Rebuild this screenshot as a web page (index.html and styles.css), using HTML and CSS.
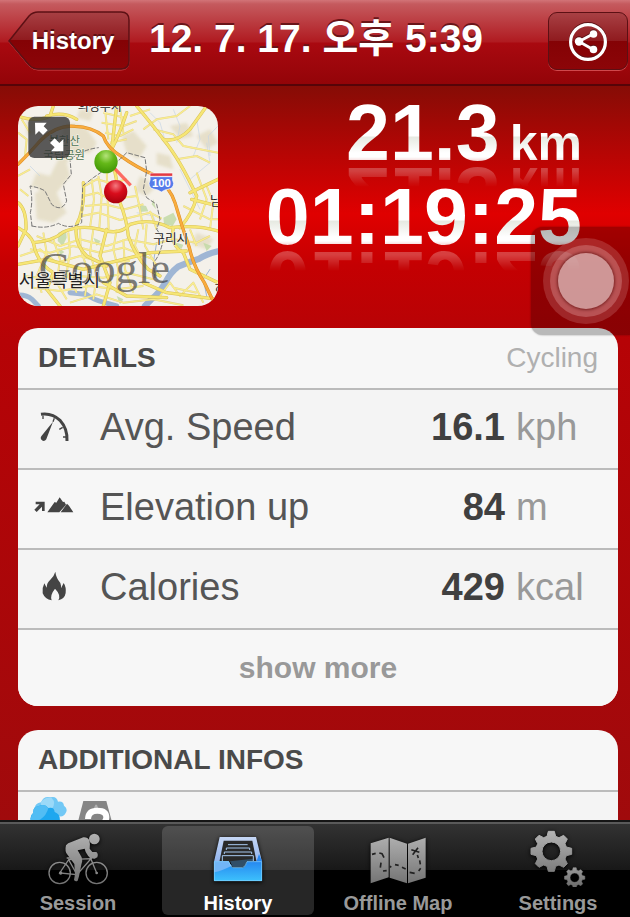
FILE: index.html
```html
<!DOCTYPE html>
<html lang="ko">
<head>
<meta charset="utf-8">
<meta name="viewport" content="width=device-width, initial-scale=1">
<title>12. 7. 17. 오후 5:39</title>
<link rel="stylesheet" href="styles.css">
</head>
<body>
<header class="topbar">
  <button class="back" type="button">
    <svg class="back-shape" viewBox="0 0 122 60" preserveAspectRatio="none" aria-hidden="true">
      <defs>
        <linearGradient id="backFill" x1="0" y1="0" x2="0" y2="1">
          <stop offset="0" stop-color="#a84044"/><stop offset=".5" stop-color="#8f1a1e"/>
          <stop offset=".5" stop-color="#840205"/><stop offset="1" stop-color="#8c0508"/>
        </linearGradient>
      </defs>
      <path d="M1 31 L21 6 Q25 2 30 2 H113 Q121 2 121 10 V51 Q121 59 113 59 H30 Q25 59 21 55Z" fill="none" stroke="#d0484c" stroke-width="1"/>
      <path d="M1 30 L21 5 Q25 1 30 1 H113 Q121 1 121 9 V50 Q121 58 113 58 H30 Q25 58 21 54Z" fill="url(#backFill)" stroke="#5c1014" stroke-width="1.5"/>
    </svg>
    <span class="back-label">History</span>
  </button>
  <h1 class="title">12. 7. 17. 오후 5:39</h1>
  <button class="share" type="button" aria-label="Share">
    <svg class="share-icon" viewBox="0 0 40 40" aria-hidden="true">
      <circle cx="20" cy="21" r="17.400" fill="none" stroke="#fff" stroke-width="3.200"/>
      <path d="M25 13 L11 20.500 L25 28.500" fill="none" stroke="#fff" stroke-width="2.800"/>
      <circle cx="25.500" cy="13" r="3.800" fill="#fff"/><circle cx="11" cy="20.500" r="4.200" fill="#fff"/><circle cx="25.500" cy="28.500" r="3.800" fill="#fff"/>
    </svg>
  </button>
</header>

<main class="content">
  <section class="hero">
    <button class="map" type="button" aria-label="Expand map">
      <svg class="map-art" viewBox="24 30 600 600" aria-hidden="true">
        <defs>
          <radialGradient id="pinGreen" cx=".5" cy=".25" r=".75"><stop offset="0" stop-color="#b4e37a"/><stop offset=".45" stop-color="#64b818"/><stop offset="1" stop-color="#3f9404"/></radialGradient>
          <radialGradient id="pinRed" cx=".5" cy=".25" r=".75"><stop offset="0" stop-color="#f47a80"/><stop offset=".45" stop-color="#d90d1c"/><stop offset="1" stop-color="#a8000c"/></radialGradient>
          <filter id="soft" x="-10%" y="-10%" width="120%" height="120%"><feGaussianBlur stdDeviation="4"/></filter>
          <g id="roads" fill="none" stroke-linecap="round" stroke-linejoin="round">
            <path d="M24 395 Q60 415 70 440 Q130 435 160 408 Q210 385 270 400 Q330 420 360 385 Q420 365 480 395 Q560 385 624 405"/>
            <path d="M300 165 Q320 240 330 320 Q350 370 355 420 Q375 480 415 520 L450 540"/>
            <path d="M320 30 Q312 100 305 160 M350 50 Q330 110 305 160"/>
            <path d="M24 320 Q50 340 48 400 L24 450 M70 440 Q80 500 130 530 L110 580 L150 630"/>
            <path d="M380 30 Q430 90 460 130 Q510 190 560 300 Q550 350 510 395"/>
            <path d="M220 260 Q225 340 200 385 Q190 440 230 480 L290 510"/>
            <path d="M110 60 Q160 45 200 70 M24 60 Q80 80 120 60 L130 30"/>
            <path d="M460 130 Q500 140 540 100 L590 30 M540 290 L624 250 M545 310 L624 330"/>
            <path d="M490 395 Q480 450 520 470 L540 520 L624 560 M400 560 L470 590 L624 610"/>
            <path d="M24 505 L110 490 L220 520 L300 500 L420 470 L530 465"/>
            <path d="M280 560 L350 600 L470 605 M290 400 L270 480 L300 560 L280 630"/>
          </g>
          <g id="lanes" fill="none" stroke-linejoin="round">
            <path d="M225 270 L260 250 L305 262 L350 250 M222 300 L262 290 L300 310 L380 300 M225 330 L285 325 L345 340 L400 325 M215 360 L265 350 L330 372 L420 350 L455 368"/>
            <path d="M245 250 L252 310 L240 395 M265 240 L275 300 L268 395 M290 220 L296 400 M375 270 L388 330 L400 400 M420 345 L440 400"/>
            <path d="M80 420 L150 450 L210 430 L290 450 L350 430 L430 445 L490 430 M60 460 L120 470 L190 450 L270 470 L340 455 L430 490 M30 480 L90 460 L140 500 L210 480 L280 500 L360 495"/>
            <path d="M100 410 L110 470 L80 540 L95 590 M130 430 L150 490 L140 560 L170 610 M175 410 L180 470 L170 530 L200 590 M210 395 L212 460 L235 530 L225 600 M250 400 L240 470 L260 540 L250 610 M320 400 L310 460 L325 520 L320 590 M340 430 L345 520 L370 590 M385 400 L375 450 L400 500 M410 385 L405 450 L440 510"/>
            <path d="M40 540 L120 550 L200 540 L280 545 L350 530 L430 550 M70 575 L150 585 L240 570 L320 580 L400 570 M180 620 L260 595 L340 620 L430 610 L520 628"/>
            <path d="M280 50 L345 65 M275 80 L340 90 L380 75 M285 110 L330 120 L370 100 M285 40 L295 130 M330 35 L340 110 M360 60 L420 40 M300 140 L350 130"/>
            <path d="M400 100 L440 70 L500 60 L540 30 M430 100 L490 115 L520 150 L624 170 M500 190 L560 180 L600 200 M560 230 L590 310 L570 370 M520 330 L600 370 L624 370 M490 430 L560 440 L600 420 M540 400 L560 450"/>
            <path d="M24 240 L60 220 M30 280 L55 300 M24 110 L50 130 L45 180 M35 70 L60 110 M590 270 L610 320 L600 400 M450 600 L480 560 L510 600 L550 560 L580 620 M490 575 L560 590"/>
          </g>
        </defs>
        <rect x="24" y="30" width="600" height="600" fill="#f4f1ea"/>
        <g fill="#ddd4b4" opacity=".6" filter="url(#soft)">
          <path d="M160 90 Q200 70 235 105 L260 140 Q240 190 210 160 L170 200 L180 240 L140 290 L160 340 L110 330 L80 270 L60 280 L80 230 L120 240 L150 180Z"/>
          <path d="M335 120 L370 105 L410 150 L385 190 L350 170Z M390 240 L440 270 L410 300 L375 285Z M480 90 L530 80 L550 120 L510 130Z M560 120 L600 100 L624 140 L590 160Z M210 40 L250 45 L240 75 L200 65Z M440 170 L480 180 L490 220 L440 205Z M50 65 L75 70 L80 110 L50 120Z M560 410 L610 430 L590 460 L545 445Z M75 290 L130 280 L170 350 L130 380 L80 370Z"/>
        </g>
        <g fill="#c2d9a6" opacity=".85"><path d="M460 365 L490 350 L500 370 L488 390 L462 385Z M380 325 L408 330 L415 346 L390 348Z M145 410 L168 400 L170 425 L158 450 L143 435Z M500 440 L520 446 L515 458 L497 452Z M250 425 L272 435 L260 450Z M430 310 L438 340 L425 325Z M145 455 L163 468 L150 478Z M580 440 L605 450 L590 465Z M320 600 L340 610 L330 625Z"/></g>
        <g fill="none" stroke="#c5d4e4" stroke-width="2"><path d="M490 40 L510 90 L500 140 M560 70 L570 130 L550 180 M590 140 L600 200 L540 250 M510 220 L530 260 L570 340 M60 210 L90 240 M380 350 L430 360 L450 420 M624 90 L595 120 L600 180 M420 50 L450 80 L470 150"/></g>
        <g fill="none" stroke="#9fb6d4" stroke-linecap="round"><path d="M624 466 Q590 474 568 488 Q530 500 504 512 Q480 530 466 560 Q448 592 424 610 L405 630" stroke-width="19"/><path d="M24 597 Q50 596 66 610 L85 630 M225 592 Q250 612 285 620 L320 630 M180 590 L225 595" stroke-width="15"/><path d="M600 520 L580 550 L590 600 M440 440 L430 500 L450 540" stroke-width="3"/></g>
        <use href="#lanes" stroke="#dccb78" stroke-width="6" opacity=".8"/><use href="#lanes" stroke="#f9ec8e" stroke-width="4"/>
        <use href="#roads" stroke="#d9c258" stroke-width="10"/><use href="#roads" stroke="#f6e675" stroke-width="7"/>
        <g fill="none" stroke-linecap="round">
          <path d="M24 205 Q60 170 90 135 Q140 85 195 91 Q245 92 280 120 Q290 155 335 182 Q380 215 435 238 Q480 275 495 320 Q515 390 538 455 Q550 510 583 560 L607 610" stroke="#d98d25" stroke-width="10"/>
          <path d="M24 205 Q60 170 90 135 Q140 85 195 91 Q245 92 280 120 Q290 155 335 182 Q380 215 435 238 Q480 275 495 320 Q515 390 538 455 Q550 510 583 560 L607 610" stroke="#f9ac3e" stroke-width="7"/>
          <path d="M66 390 L61 350 Q70 310 60 270 Q90 275 105 285 L125 325 Q155 350 170 315 L160 265 L184 235 L180 190 Q220 160 265 155 M66 390 Q110 400 145 382 Q180 402 215 380 L218 270 L250 245 L330 190 L350 170 L405 185 L410 225 L400 280 L410 305 L440 325 L450 370 L440 400 L460 430 Q450 480 430 500 L435 545" stroke="#777" stroke-width="3" stroke-dasharray="12 7"/>
        </g>
        <g class="map-text">
          <text x="203" y="44" font-size="36">의정부시</text>
          <text x="116" y="148" font-size="34" class="park">북한산</text>
          <text x="100" y="188" font-size="34" class="park">국립공원</text>
          <text x="430" y="440" font-size="38">구리시</text>
          <text x="600" y="328" font-size="38">남</text>
          <text x="614" y="592" font-size="38">하</text>
          <text x="86" y="562" font-size="134" class="brand">Google</text>
          <text x="26" y="574" font-size="53">서울특별시</text>
        </g>
        <path d="M420 231 H488 V241 H420Z" fill="#e33b42" stroke="#fff" stroke-width="2"/>
        <path d="M420 242 H488 Q486 252 491 262 Q490 277 477 279 Q465 280 454 288 Q443 280 431 279 Q418 277 417 262 Q422 252 420 242Z" fill="#557bea" stroke="#fff" stroke-width="2"/>
        <text x="454" y="272" class="route">100</text>
        <path d="M305 208 L362 268" stroke="#ff4a42" stroke-opacity=".8" stroke-width="10"/>
        <circle cx="288" cy="197" r="35" fill="url(#pinGreen)"/><circle cx="317" cy="287" r="35" fill="url(#pinRed)"/>
        <rect x="55" y="62" width="125" height="124" rx="18" fill="#333" fill-opacity=".8"/>
        <path d="M75 80 H110 L101 91 L113 103 L99 117 L87 105 L76 116Z" fill="#fff"/>
        <path d="M160 166 H123 L134 154 L120 141 L134 127 L148 141 L160 130Z" fill="#fff"/>
      </svg>
    </button>
    <div class="stats">
      <p class="stat">21.3<span class="stat-unit">km</span></p>
      <p class="stat">01:19:25</p>
    </div>
  </section>

  <section class="card">
    <div class="card-head"><h2 class="card-title">DETAILS</h2><span class="card-note">Cycling</span></div>
    <table class="metrics">
      <tbody>
      <tr>
        <td class="metric-icon"><svg class="glyph" viewBox="0 0 126 96" aria-hidden="true">
          <path d="M39 10 Q72 5 97 29 Q119 53 117 90" fill="none" stroke="#444" stroke-width="9"/>
          <path d="M45 14 V24 M79 22 L75 32 M104 49 L94 55 M116 78 H105" stroke="#444" stroke-width="4"/>
          <path d="M75 32 L56 82 A9 9 0 1 1 41 74Z" fill="#444"/></svg></td>
        <th class="metric-name" scope="row">Avg. Speed</th><td class="metric-value">16.1</td><td class="metric-unit">kph</td>
      </tr>
      <tr>
        <td class="metric-icon"><svg class="glyph" viewBox="0 0 126 96" aria-hidden="true">
          <path d="M23 32 H50 V60 H42 V47 L26 63 L19 56 L35 40 H23Z" fill="#444"/>
          <path d="M58 64 L80 33 L85 35 L95 19 L105 33 L109 32 L114 41 L94 64Z M98 64 L117 38 L123 44 L136 64Z" fill="#444"/></svg></td>
        <th class="metric-name" scope="row">Elevation up</th><td class="metric-value">84</td><td class="metric-unit">m</td>
      </tr>
      <tr>
        <td class="metric-icon"><svg class="glyph" viewBox="0 0 126 96" aria-hidden="true">
          <path d="M82 2 Q84 20 97 36 Q100 44 99 52 L107 36 Q115 48 113 66 Q110 84 91 88 Q100 72 81 53 Q65 73 71 88 Q51 85 44 67 Q42 50 49 37 L56 50 Q56 35 67 26 Q79 14 82 2Z" fill="#444"/></svg></td>
        <th class="metric-name" scope="row">Calories</th><td class="metric-value">429</td><td class="metric-unit">kcal</td>
      </tr>
      </tbody>
    </table>
    <button class="more" type="button">show more</button>
  </section>

  <section class="card">
    <div class="card-head"><h2 class="card-title">ADDITIONAL INFOS</h2></div>
    <div class="infos">
      <svg class="info-icon" viewBox="88 48 114 114" aria-hidden="true">
        <path d="M102 86 Q103 69 121 67 Q129 47 149 52 Q168 47 172 65 Q188 62 190 77 Q203 86 195 99 Q188 113 173 108 L160 125 L120 110Z" fill="#72c8f5"/>
        <path d="M120 68 Q132 49 153 54 Q168 69 153 88 L125 88Z" fill="#9bd9f8"/>
        <path d="M92 128 Q84 109 98 98 Q96 81 113 79 Q132 69 143 84 Q161 80 162 96 Q181 103 177 126 L160 146 H110Z" fill="#1ea7ef"/>
        <path d="M98 98 Q96 81 113 79 Q132 69 143 84 Q138 106 118 119 L92 124 Q87 108 98 98Z" fill="#52bdf4"/>
      </svg>
      <svg class="info-icon" viewBox="234 48 114 114" aria-hidden="true">
        <path d="M250 63 H319 L345 160 H225Z" fill="#858585"/>
        <path d="M286 74 H291 L294 84 H282Z" fill="#b0b0b0"/>
        <path d="M264 117 Q265 92 292 92 Q319 92 319 112 Q319 128 294 140" fill="none" stroke="#fff" stroke-width="18"/>
      </svg>
    </div>
  </section>
</main>

<nav class="tabs" aria-label="Main">
  <a class="tab" href="#session">
    <svg class="tab-icon" viewBox="0 0 228 183" aria-hidden="true">
      <defs><linearGradient id="metal" gradientUnits="userSpaceOnUse" x1="0" y1="20" x2="0" y2="180"><stop offset="0" stop-color="#b2b2b2"/><stop offset="1" stop-color="#707070"/></linearGradient></defs>
      <g fill="none" stroke="url(#metal)" stroke-width="4">
        <circle cx="59" cy="141" r="32"/><circle cx="170" cy="141" r="32"/>
        <path d="M59 141 L86 101 L111 146 Z M86 101 L153 98 L111 146 M80 96 H94 M148 87 L170 141 M147 87 L164 82"/>
      </g>
      <circle cx="62" cy="141" r="5" fill="#888"/><circle cx="170" cy="141" r="4" fill="#888"/>
      <circle cx="163" cy="39" r="16" fill="url(#metal)"/>
      <path d="M78 58 Q83 50 94 48 L130 34 Q143 33 148 43 Q151 53 149 68 L157 78 H169 Q176 83 172 94 L164 98 Q152 99 145 91 L137 78 L134 68 L113 73 L125 94 Q129 105 124 116 L117 151 L113 164 Q107 168 102 162 L105 145 L103 114 L83 87 Q73 78 78 58Z" fill="url(#metal)"/>
    </svg>
    <span class="tab-label">Session</span>
  </a>
  <a class="tab tab-current" href="#history" aria-current="page">
    <svg class="tab-icon" viewBox="600 135 228 183" aria-hidden="true">
      <defs>
        <linearGradient id="trayTop" x1="0" y1="0" x2="0" y2="1"><stop offset="0" stop-color="#c6d7f5"/><stop offset="1" stop-color="#91b4ee"/></linearGradient>
        <linearGradient id="trayFront" x1="0" y1="0" x2="0" y2="1"><stop offset="0" stop-color="#2687f0"/><stop offset="1" stop-color="#3dc1fc"/></linearGradient>
      </defs>
      <path d="M659 168 H768 L786 242 H642Z" fill="url(#trayTop)"/>
      <path d="M671 179 H757 L770 244 H658Z" fill="#292929"/>
      <path d="M642 241 H686 Q691 258 699 260 H728 Q736 258 741 241 H786 V300 H642Z" fill="url(#trayFront)"/>
      <path d="M642 241 H686 Q691 251 696 254 Q665 269 642 274Z" fill="#72b5f6"/>
      <path d="M769 243 L777 219 L786 241Z" fill="#2788f2"/>
      <path d="M690 241 L760 233 V241 H741 Q736 258 728 260 H699Z" fill="#314f68"/>
      <path d="M684 191 H743 M679 207 V201 H749 V207 M673 219 V213 H755 V219 M667 240 V224 H760 V240" fill="none" stroke="#a7c8ef" stroke-width="3"/>
      <path d="M643 242 V299 H785 V242 H741 Q736 258 728 260 H699 Q691 258 686 242Z" fill="none" stroke="#8ad4ff" stroke-width="2"/>
    </svg>
    <span class="tab-label">History</span>
  </a>
  <a class="tab" href="#map">
    <svg class="tab-icon" viewBox="148 135 228 183" aria-hidden="true">
      <defs><linearGradient id="metalMap" gradientUnits="userSpaceOnUse" x1="0" y1="165" x2="0" y2="310"><stop offset="0" stop-color="#b0b0b0"/><stop offset="1" stop-color="#737373"/></linearGradient></defs>
      <path d="M180 187 L234 170 V289 L180 307Z M237 170 L289 188 V307 L237 290Z M292 188 L345 170 V290 L292 307Z" fill="url(#metalMap)"/>
      <path d="M184 220 L195 217 M206 216 L214 218 L220 230 M211 245 L209 260 M217 270 L228 269 M237 259 L242 256 M253 251 L264 253 M274 259 L285 264 M297 274 L312 277 M324 270 L330 262 M329 250 L327 238 M323 231 L320 222 M302 206 L326 214 M306 221 L322 200" fill="none" stroke="#222" stroke-width="5"/>
    </svg>
    <span class="tab-label">Offline Map</span>
  </a>
  <a class="tab" href="#settings">
    <svg class="tab-icon" viewBox="632 135 228 183" aria-hidden="true">
      <defs>
        <linearGradient id="gearFill" gradientUnits="userSpaceOnUse" x1="0" y1="-60" x2="0" y2="60"><stop offset="0" stop-color="#b4b4b4"/><stop offset="1" stop-color="#7d7d7d"/></linearGradient>
        <path id="gear" fill-rule="evenodd" fill="url(#gearFill)" stroke="url(#gearFill)" stroke-width="3" stroke-linejoin="round" d="M-13 -45 L-9 -60 H9 L13 -45 L23 -41 L37 -48 L48 -37 L41 -23 L45 -13 L61 -9 V9 L45 13 L41 23 L48 37 L37 48 L23 41 L13 45 L9 60 H-9 L-13 45 L-23 41 L-37 48 L-48 37 L-41 23 L-45 13 L-61 9 V-9 L-45 -13 L-41 -23 L-48 -37 L-37 -48 L-23 -41Z M0 -28 A28 28 0 1 0 0 28 A28 28 0 1 0 0 -28Z"/>
      </defs>
      <use href="#gear" transform="translate(726 211)"/>
      <use href="#gear" transform="translate(796 290) scale(.5)" opacity=".85"/>
    </svg>
    <span class="tab-label">Settings</span>
  </a>
</nav>

<button class="assist" type="button" aria-label="Assistive menu"><span class="assist-ring"></span></button>
</body>
</html>
```

FILE: styles.css
```css
* { box-sizing: border-box; }

body {
  margin: 0;
  height: 100vh;
  display: flex;
  flex-direction: column;
  position: relative;
  overflow: hidden;
  font-family: "Liberation Sans", "Noto Sans CJK KR", sans-serif;
  background: #a10a0b;
}

button { font: inherit; margin: 0; padding: 0; border: 0; background: none; }
h1, h2, p { margin: 0; }

.topbar {
  flex: none;
  display: grid;
  grid-template-columns: 1fr auto 1fr;
  align-items: center;
  height: 86px;
  padding: 0 2px 2px 8px;
  border-bottom: 2px solid #560408;
  background: linear-gradient(#d27478 0, #c55a5e 4px, #b01a20 42px, #a90910 43px, #930408 100%);
}

.back {
  justify-self: start;
  position: relative;
  width: 122px;
  height: 60px;
  padding-left: 8px;
  color: #fff;
  font-size: 24px;
  font-weight: bold;
  text-shadow: 0 -2px 0 #5c1014;
}
.back-shape { position: absolute; inset: 0; width: 100%; height: 100%; }
.back-label { position: relative; }

.title {
  padding-right: 4px;
  padding-bottom: 4px;
  color: #fff;
  font-size: 39px;
  line-height: 56px;
  font-weight: bold;
  white-space: nowrap;
  text-shadow: 0 -2px 0 #6a1418;
}

.share {
  justify-self: end;
  display: grid;
  place-items: center;
  width: 80px;
  height: 58px;
  border: 1px solid #5c1014;
  border-radius: 9px;
  background: linear-gradient(#a84044, #8f1a1e 50%, #840205 50%, #8c0508);
  box-shadow: 0 1px 0 #d0484c;
}
.share-icon { width: 40px; height: 40px; filter: drop-shadow(0 -1px 0 #5c1014); }

.content {
  flex: 1;
  min-height: 0;
  overflow-y: auto;
  scrollbar-width: none;
  padding: 20px 12px 0 18px;
  background: linear-gradient(#860c06 0, #b80504 70px, #e00000 128px, #c40002 180px, #b60306 254px, #a00a0c 100%);
}

.hero { display: flex; height: 222px; }

.map {
  flex: none;
  width: 200px;
  height: 200px;
  border-radius: 20px;
  overflow: hidden;
}
.map-art { display: block; width: 100%; height: 100%; }
.map-text { font-family: "Noto Sans CJK KR", sans-serif; fill: #222; paint-order: stroke; stroke: #f8f6ee; stroke-width: 3px; }
.map-text .park { fill: #4c7250; }
.map-text .brand { font-family: "Liberation Serif", serif; fill: #444; fill-opacity: .7; stroke: none; }
.route { font: bold 34px "Liberation Sans", sans-serif; fill: #fff; text-anchor: middle; }

.stats { flex: 1; margin-top: -15px; padding-right: 36px; text-align: right; }
.stat {
  height: 84px;
  font-size: 79px;
  line-height: 84px;
  font-weight: bold;
  color: transparent;
  background: linear-gradient(#fff 45px, #e6e9e1 46px, #fff 62px, #fff 66px, #f3cccc 71px);
  -webkit-background-clip: text;
  background-clip: text;
  -webkit-box-reflect: below -22px linear-gradient(transparent 50px, rgba(255, 255, 255, .3) 70px);
}
.stat-unit { margin-left: 10px; font-size: 50px; }

.card {
  margin-bottom: 24px;
  border-radius: 20px;
  overflow: hidden;
  background: #f7f7f7;
}
.card-head {
  display: flex;
  align-items: center;
  justify-content: space-between;
  height: 62px;
  padding: 0 20px;
  border-bottom: 2px solid #bbb;
  font-size: 28px;
}
.card-title { font-size: 28px; font-weight: bold; color: #4a4a4a; }
.card-note { color: #b0b0b0; }

.metrics { width: 100%; table-layout: fixed; border-spacing: 0; font-size: 38px; }
.metrics td, .metrics th { height: 80px; padding: 0 0 4px; border-bottom: 2px solid #bbb; }
.metrics tr:nth-child(odd) { background: #f4f4f4; }
.metrics .metric-icon { width: 82px; padding-left: 10px; }
.glyph { display: block; width: 42px; height: 32px; overflow: visible; }
.metrics .metric-name { text-align: left; font-weight: normal; color: #555; }
.metric-value { width: 120px; text-align: right; font-weight: bold; color: #404040; }
.metrics .metric-unit { width: 113px; padding-left: 11px; color: #999; }

.more {
  display: block;
  width: 100%;
  height: 76px;
  background: #f7f7f7;
  color: #999;
  font-size: 30px;
  font-weight: bold;
}

.infos { display: flex; gap: 10px; height: 80px; padding: 4px 12px; background: #f4f4f4; }
.info-icon { width: 38px; height: 38px; }

.tabs {
  flex: none;
  display: grid;
  grid-template-columns: repeat(4, 1fr);
  gap: 8px;
  height: 97px;
  margin-right: -4px;
  padding: 4px 0 3px 2px;
  border-top: 2px solid #151515;
  background: linear-gradient(#5a5a5a 2px, #323232 2px, #181818 48px, #000 48px);
}
.tab {
  display: flex;
  flex-direction: column;
  align-items: center;
  border-radius: 6px;
  color: #999;
  font-size: 20px;
  font-weight: bold;
  line-height: 24px;
  text-decoration: none;
}
.tab-current { color: #fff; background: rgba(255, 255, 255, .15); }
.tab-icon { width: 76px; height: 61px; margin-bottom: 4px; filter: drop-shadow(0 1px 2px #000); }

.assist {
  position: absolute;
  top: 227px;
  right: -10px;
  display: grid;
  place-items: center;
  width: 109px;
  height: 108px;
  border-radius: 12px;
  background: rgba(0, 0, 0, .25);
  box-shadow: 0 0 2px rgba(0, 0, 0, .4);
}
.assist-ring {
  width: 56px;
  height: 56px;
  border-radius: 50%;
  background: rgba(224, 192, 192, .78);
  box-shadow: 0 0 3px 1px #722, 0 0 0 8px rgba(220, 150, 150, .4), 0 0 0 15px rgba(220, 150, 150, .25);
}
```
